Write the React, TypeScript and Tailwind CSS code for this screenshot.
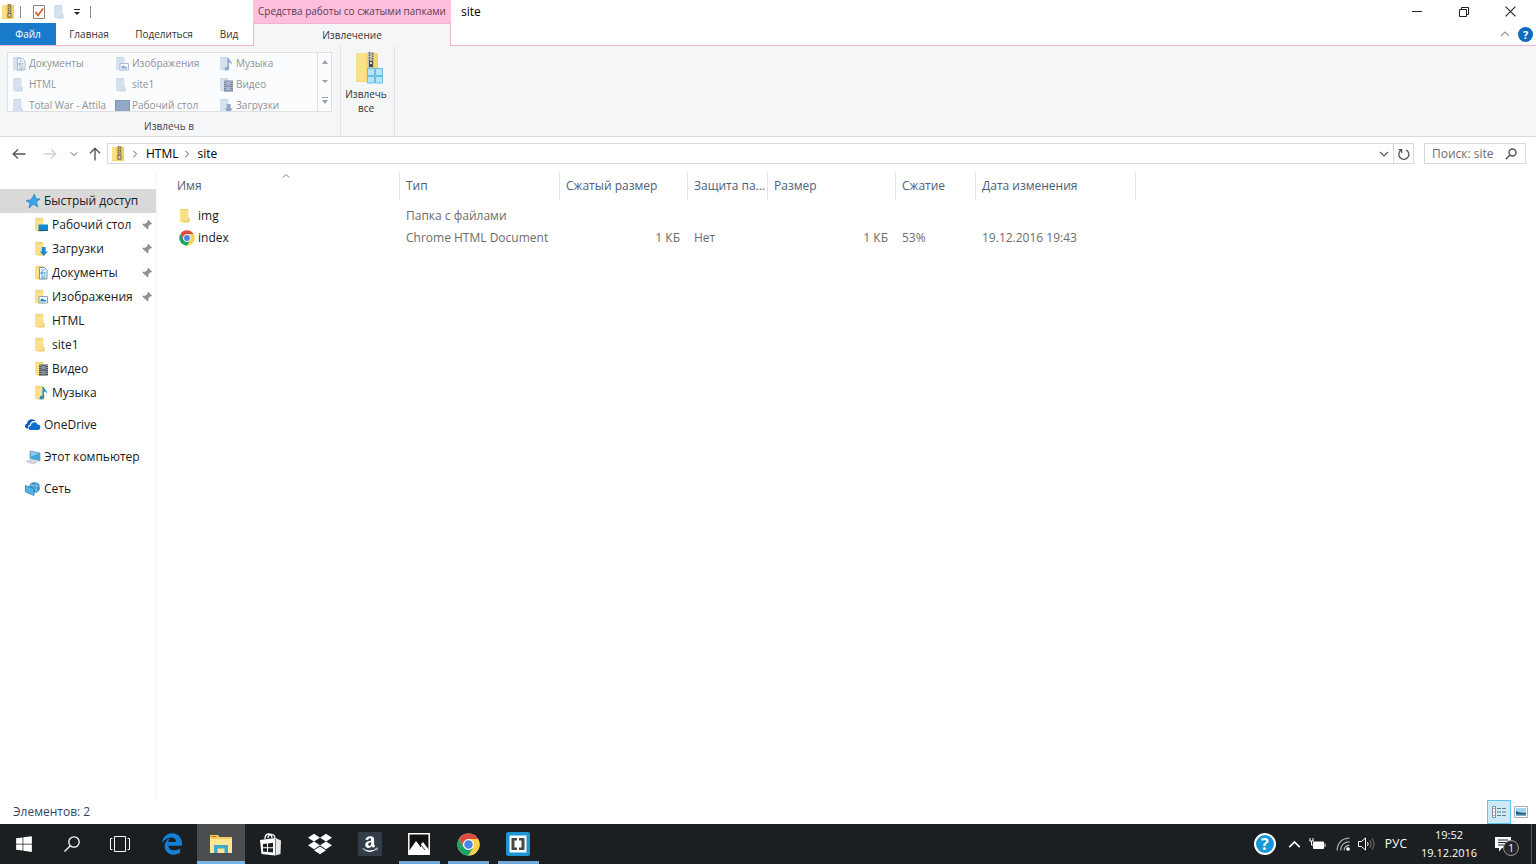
import { FunctionComponent, ReactNode } from "react";
import { FaAmazon, FaDropbox, FaEdgeLegacy, FaWindows } from "react-icons/fa6";

type Badge = "desktop" | "download" | "document" | "image" | "video" | "music";

const FolderIcon: FunctionComponent<{ badge?: Badge; muted?: boolean }> = ({ badge, muted }) => {
  const back = muted ? "#c6d5e8" : "#efcb63";
  const front = muted ? "#d6e1ef" : "#fbdf8a";
  const blue = muted ? "#8ea6c8" : "#1c8ad8";
  const dark = muted ? "#7484a0" : "#4a4f57";
  return (
    <svg className="h-4 w-4 shrink-0" viewBox="0 0 16 16">
      {badge === "desktop" && muted ? (
        <path d="M.5 2.500h14v11H.5z" fill="#93a8c8" stroke="#8296b8" />
      ) : (
        <>
          <path d="M2 1h7v13H2z" fill={back} />
          <path d="M1 1l3 1v12.500l-3-.8z" fill={front} />
          <path d="M4 2h5.500v11H4z" fill={front} />
          <path d="M9 10h1.500v4.500H4V13h5z" fill={back} />
        </>
      )}
      {badge === "desktop" && !muted && (
        <>
          <path d="M4.500 7.500h9.500v6.500H4.500z" fill="#1587d4" />
          <path d="M4.500 13h9.500v1H4.500z" fill="#0c5d9b" />
        </>
      )}
      {badge === "download" && <path d="M7.800 6h3.800v4.500h2.200l-4 4.500-4-4.500h2z" fill={blue} />}
      {badge === "document" && (
        <>
          <path d="M5.500 2.500h5l2.500 2.500v9H5.500z" fill="#f5f9fd" stroke={muted ? "#a9bcd6" : "#7396b9"} />
          <path d="M7 7h2v2H7zM7 11h4.500M10 7.500h1.500M10 9h1.500M7.500 5h3M7 12.800h4.500" fill="none" stroke={blue} strokeWidth=".8" />
        </>
      )}
      {badge === "image" && (
        <>
          <path d="M5 7.500h8.500V14H5z" fill="#f8fbfd" stroke={muted ? "#a9bcd6" : "#8ea3b5"} />
          <path d="M6.500 12.500V10.500l2-1 2 1.500h1.700v1.500z" fill={blue} />
        </>
      )}
      {badge === "video" && (
        <>
          <path d="M5 3.500h9v11H5z" fill={dark} />
          <path d="M7.200 4.500h4.500v4H7.200zM7.200 9.500h4.500v4H7.200z" fill={muted ? "#a9b8d0" : "#8293a6"} />
          <path d="M6 4v10M13 4v10" stroke="#e3e7ec" strokeDasharray="1 1" />
        </>
      )}
      {badge === "music" && (
        <path d="M8.500 2H10c.2 2.500 3.500 3.500 3 7-.4-1.500-1.500-2.500-3-2.500v5.500c0 3-4.300 3.200-4.300.8 0-1.800 1.500-2.300 2.800-2z" fill={blue} />
      )}
    </svg>
  );
};

const ZipIcon = () => (
  <svg className="h-4 w-4 shrink-0" viewBox="0 0 16 16">
    <path d="M2 1h12v14H2z" fill="#f3cf5b" />
    <path d="M2 1h4v14l-4-1z" fill="#fbe185" />
    <path d="M7.500 0h4v14h-4z" fill="#b7a766" />
    <path d="M8.500 0v9M10.500 1v8" stroke="#6f6a55" strokeDasharray="1 1" />
    <path d="M8 9.500h3v3.500H8z" fill="#ddd6b8" stroke="#7c7452" />
  </svg>
);

const ExtractIcon = () => (
  <svg className="ml-1 h-8 w-8" viewBox="-1 0 32 32">
    <path d="M3 1h22v29H3z" fill="#f6d56f" />
    <path d="M3 1h10v29l-10-1z" fill="#fbe08b" />
    <path d="M15 0h6v16h-6z" fill="#c9c5b4" />
    <path d="M16.500 0v9M19.500 1v9" stroke="#66645c" strokeWidth="1.500" strokeDasharray="1.500 1" />
    <path d="M16 9h4v6h-4z" fill="#4d4b47" />
    <path d="M17 10h2v2h-2z" fill="#e5e2da" />
    <g fill="#b5e4fa" stroke="#69bde3">
      <path d="M14.500 16.500h7v7h-7zM22.500 16.500h7v7h-7zM14.500 24.500h7v6.500h-7zM22.500 24.500h7v6.500h-7z" />
    </g>
  </svg>
);

const ChromeIcon: FunctionComponent<{ className: string }> = ({ className }) => (
  <svg className={className} viewBox="0 0 48 48">
    <circle cx="24" cy="24" r="23" fill="#fff" />
    <path d="M4.080 12.500A23 23 0 0 1 43.920 12.500H24A11.500 11.500 0 0 0 14.040 29.750z" fill="#dd4b3e" />
    <path d="M43.920 12.500A23 23 0 0 1 24 47L33.960 29.750A11.500 11.500 0 0 0 24 12.500z" fill="#fdd046" />
    <path d="M24 47A23 23 0 0 1 4.080 12.500L14.040 29.750A11.500 11.500 0 0 0 33.960 29.750z" fill="#1ca261" />
    <circle cx="24" cy="24" r="11" fill="#f1f1f1" />
    <circle cx="24" cy="24" r="8.800" fill="#4a86e8" />
  </svg>
);

const Chevron: FunctionComponent<{ d: string; className: string }> = ({ d, className }) => (
  <svg className={className} viewBox="0 0 10 10" fill="none" stroke="currentColor" strokeWidth="1.200">
    <path d={d} />
  </svg>
);

const DOWN = "M1 3l4 4 4-4";
const UP = "M1 7l4-4 4 4";
const RIGHT = "M3 1l4 4-4 4";

const PinIcon = () => (
  <svg className="h-3 w-3" viewBox="0 0 12 12">
    <path d="M7.200.8l4 4-1 .7-.8-.2-2 2 .2 2-1 1-2.500-2.500L.8 11.200 3.700 7.700 1.500 5.500l1-1 2 .2 2-2-.1-1z" fill="#8a9096" />
  </svg>
);

const StarIcon = () => (
  <svg className="h-4 w-4" viewBox="0 0 16 16">
    <path d="M9.500 1l1.200 4.600 4.300.4-3.600 3 1.400 5-4.300-2.800L4 15l1-4.800L1 7.500l4.900-.6z" fill="#3ba3ea" stroke="#2182c8" strokeWidth=".7" />
  </svg>
);

const OneDriveIcon = () => (
  <svg className="h-4 w-4" viewBox="0 0 16 16">
    <path d="M1.800 11.500C-.8 10.500-.4 7 2 6.800 2.200 2 8.500.5 10.800 4.300 7.500 3.500 5.200 5.500 5 7.800 2.800 8.200 2.600 10.300 3.500 11.500z" fill="#0d5db8" />
    <path d="M5.500 13c-2.800-.3-2.500-4.200.3-4.200C6.200 4.500 11.500 4 12.500 7.600c1.700-.2 3 1 2.800 3-.1 1.600-1 2.400-2.300 2.400z" fill="#0d6fd0" />
  </svg>
);

const ComputerIcon = () => (
  <svg className="h-4 w-4" viewBox="0 0 16 16">
    <path d="M5 2l10 2v8L5 9.500z" fill="#41a5df" stroke="#7f9db3" strokeWidth=".8" />
    <path d="M5.500 2.500l8 2-7.500 3z" fill="#8acdf0" />
    <path d="M1 12.500l4-1.500 7 2-4 2z" fill="#d3d9de" stroke="#a7afb6" strokeWidth=".5" />
  </svg>
);

const NetworkIcon = () => (
  <svg className="h-4 w-4" viewBox="0 0 16 16">
    <circle cx="9.500" cy="6.500" r="5.500" fill="#3c8fc4" />
    <path d="M5 5c3-1 6-1 10 1M10 1c2 3 2 7 0 11M6 3l7 8" fill="none" stroke="#9fd4ef" strokeWidth=".8" />
    <path d="M.5 4.500l8.500 3v7l-2.500-1L.5 11z" fill="#53b2e6" stroke="#2a77ab" strokeWidth=".7" />
  </svg>
);

const galleryItems: { name: string; badge?: Badge }[] = [
  { name: "Документы", badge: "document" },
  { name: "Изображения", badge: "image" },
  { name: "Музыка", badge: "music" },
  { name: "HTML" },
  { name: "site1" },
  { name: "Видео", badge: "video" },
  { name: "Total War - Attila" },
  { name: "Рабочий стол", badge: "desktop" },
  { name: "Загрузки", badge: "download" },
];

const quickAccess: { name: string; badge?: Badge; pinned?: boolean }[] = [
  { name: "Рабочий стол", badge: "desktop", pinned: true },
  { name: "Загрузки", badge: "download", pinned: true },
  { name: "Документы", badge: "document", pinned: true },
  { name: "Изображения", badge: "image", pinned: true },
  { name: "HTML" },
  { name: "site1" },
  { name: "Видео", badge: "video" },
  { name: "Музыка", badge: "music" },
];

const TitleBar = () => (
  <div className="flex h-[23px]">
    <div className="flex w-[253px] items-center">
      <ZipIcon />
      <span className="ml-1 h-3 w-px bg-[#8a8a8a]" />
      <button className="ml-[10px]" aria-label="Свойства">
        <svg className="h-4 w-4" viewBox="0 0 16 16">
          <path d="M2.500 1.500h11v13h-11z" fill="#fff" stroke="#8f8478" />
          <path d="M4.500 8l2.500 3.500 5-7" fill="none" stroke="#d9622b" strokeWidth="1.800" />
        </svg>
      </button>
      <button className="ml-[6px]" aria-label="Новая папка">
        <FolderIcon muted />
      </button>
      <button className="ml-1" aria-label="Настройка панели">
        <svg className="h-2 w-2" viewBox="0 0 8 8">
          <path d="M1 1.500h6" stroke="#222" />
          <path d="M1 4h6l-3 3z" fill="#222" />
        </svg>
      </button>
      <span className="ml-[9px] h-3 w-px bg-[#8a8a8a]" />
    </div>
    <div className="flex w-[198px] items-center justify-center whitespace-nowrap bg-[#fdbfdc] text-[10px] text-[#5e3c4d]">
      Средства работы со сжатыми папками
    </div>
    <h1 className="flex flex-1 items-center pl-[10px] text-xs text-black">site</h1>
    <div className="flex pr-[2px] text-[#222]">
      <button className="flex w-[47px] items-center justify-center" aria-label="Свернуть">
        <span className="h-px w-[10px] bg-[#222]" />
      </button>
      <button className="flex w-[47px] items-center justify-center" aria-label="Восстановить">
        <svg className="h-[10px] w-[10px]" viewBox="0 0 10 10" fill="none" stroke="currentColor">
          <path d="M.5 2.500h7v7h-7zM2.500 2.500v-2h7v7h-2" />
        </svg>
      </button>
      <button className="flex w-[47px] items-center justify-center" aria-label="Закрыть">
        <svg className="h-[11px] w-[11px]" viewBox="0 0 10 10" fill="none" stroke="currentColor">
          <path d="M.5.5l9 9M9.500.5l-9 9" />
        </svg>
      </button>
    </div>
  </div>
);

const RibbonTabs = () => (
  <div className="flex h-[23px] text-[10px] text-[#333]">
    <div className="flex w-[253px] border-b border-[#f0b3d1]">
      <button className="w-14 bg-[#1979ca] text-white">Файл</button>
      <button className="w-[66px]">Главная</button>
      <button className="w-[84px]">Поделиться</button>
      <button className="w-[46px]">Вид</button>
    </div>
    <button className="w-[198px] border-x border-t border-[#f0b3d1] bg-[#f5f6f8]">Извлечение</button>
    <div className="flex flex-1 items-center justify-end gap-2 border-b border-[#f0b3d1] pr-[3px]">
      <button aria-label="Свернуть ленту">
        <Chevron d={UP} className="h-[10px] w-[10px] text-[#9a9a9a]" />
      </button>
      <button className="h-[15px] w-[15px] rounded-full bg-[#0f6cbd] text-[11px] leading-[15px] font-bold text-white">?</button>
    </div>
  </div>
);

const Ribbon = () => (
  <div className="flex h-[91px] border-b border-[#dadbdc] bg-[#f5f6f8] text-[10px]">
    <div className="flex w-[341px] flex-col border-r border-[#e2e3e4] pt-[6px] pl-[7px]">
      <div className="flex h-[60px] w-[325px] overflow-hidden border border-[#dcdfe3] bg-[#fafcfe]">
        <div className="grid flex-1 auto-rows-[21px] grid-cols-[103px_104px_1fr] pl-1">
          {galleryItems.map((item) => (
            <button key={item.name} className="flex items-center gap-px whitespace-nowrap text-[#8f9297]">
              <FolderIcon badge={item.badge} muted />
              {item.name}
            </button>
          ))}
        </div>
        <div className="flex w-[14px] flex-col items-center justify-between border-l border-[#dcdfe3] py-[6px]">
          <svg className="h-[6px] w-[6px]" viewBox="0 0 6 6" fill="#9a9ea5">
            <path d="M0 5l3-4 3 4z" />
          </svg>
          <svg className="h-[6px] w-[6px]" viewBox="0 0 6 6" fill="#9a9ea5">
            <path d="M0 2h6l-3 3z" />
          </svg>
          <svg className="h-2 w-2" viewBox="0 0 8 8" fill="#9a9ea5">
            <path d="M1 0h6v1H1zM1 3h6l-3 4z" />
          </svg>
        </div>
      </div>
      <div className="flex flex-1 items-end justify-center pr-[9px] pb-[2px] text-[#444]">Извлечь в</div>
    </div>
    <div className="flex w-[54px] justify-center border-r border-[#e2e3e4] pt-[6px] pr-[3px]">
      <button className="flex flex-col items-center self-start leading-[14px] text-[#333]">
        <ExtractIcon />
        <span className="mt-[3px]">
          Извлечь
          <br />
          все
        </span>
      </button>
    </div>
  </div>
);

const AddressBar = () => (
  <div className="flex items-center gap-[10px] pt-[6px] pr-[10px] pb-2 text-xs">
    <div className="flex flex-1 items-center">
      <div className="flex w-[107px] items-center pl-3 text-[#555]">
        <button aria-label="Назад">
          <svg className="h-[14px] w-[14px]" viewBox="0 0 14 14" fill="none" stroke="currentColor" strokeWidth="1.400">
            <path d="M13.500 7H1M6 2.500L1.200 7 6 11.500" />
          </svg>
        </button>
        <button className="ml-[17px] text-[#d0d0d0]" aria-label="Вперед">
          <svg className="h-[14px] w-[14px]" viewBox="0 0 14 14" fill="none" stroke="currentColor" strokeWidth="1.400">
            <path d="M.5 7H13M8 2.500L12.800 7 8 11.500" />
          </svg>
        </button>
        <button className="ml-[13px]" aria-label="Журнал">
          <Chevron d={DOWN} className="h-2 w-2" />
        </button>
        <button className="ml-[10px]" aria-label="Вверх">
          <svg className="h-[14px] w-[14px]" viewBox="0 0 14 14" fill="none" stroke="currentColor" strokeWidth="1.400">
            <path d="M7 13.500V1M2 6.200L7 1.200l5 5" />
          </svg>
        </button>
      </div>
      <div className="flex h-[21px] flex-1 items-center border border-[#d9d9d9] pl-[2px] text-black">
        <ZipIcon />
        <Chevron d={RIGHT} className="ml-[5px] h-2 w-2 text-[#555]" />
        <a href="#html" className="ml-[7px]">HTML</a>
        <Chevron d={RIGHT} className="ml-1 h-2 w-2 text-[#555]" />
        <a href="#site" className="ml-[7px]">site</a>
        <button className="ml-auto mr-1 text-[#555]" aria-label="Предыдущие расположения">
          <Chevron d={DOWN} className="h-[10px] w-[10px]" />
        </button>
        <button className="flex h-full w-5 items-center justify-center border-l border-[#d9d9d9] text-[#555]" aria-label="Обновить">
          <svg className="h-3 w-3" viewBox="0 0 12 12" fill="none" stroke="currentColor" strokeWidth="1.300">
            <path d="M8 1.800A5 5 0 1 1 3 2.200M3.600 5V1.700H.5" />
          </svg>
        </button>
      </div>
    </div>
    <label className="flex h-[21px] w-[102px] items-center border border-[#d9d9d9] pr-2 pl-[7px]">
      <input className="w-0 flex-1 placeholder-[#6d6d6d] outline-none" placeholder="Поиск: site" aria-label="Поиск" />
      <svg className="h-3 w-3 text-[#555]" viewBox="0 0 12 12" fill="none" stroke="currentColor" strokeWidth="1.400">
        <circle cx="7.500" cy="4.500" r="3.500" />
        <path d="M5 7L.8 11.200" />
      </svg>
    </label>
  </div>
);

const SideLink: FunctionComponent<{ icon: ReactNode; name: string }> = ({ icon, name }) => (
  <a href="#place" className="mt-2 flex h-6 items-center gap-[3px] pl-[25px]">
    {icon}
    {name}
  </a>
);

const Sidebar = () => (
  <nav className="w-[157px] shrink-0 whitespace-nowrap border-r border-[#f4f4f4] pt-[17px] text-xs text-[#1a1a1a]">
    <a href="#quick" className="flex h-6 items-center gap-[3px] bg-[#d9d9d9] pl-[25px]">
      <StarIcon />
      Быстрый доступ
    </a>
    {quickAccess.map((item) => (
      <a key={item.name} href="#folder" className="flex h-6 items-center gap-[2px] pr-[3px] pl-[34px]">
        <FolderIcon badge={item.badge} />
        <span className="flex-1">{item.name}</span>
        {item.pinned && <PinIcon />}
      </a>
    ))}
    <SideLink icon={<OneDriveIcon />} name="OneDrive" />
    <SideLink icon={<ComputerIcon />} name="Этот компьютер" />
    <SideLink icon={<NetworkIcon />} name="Сеть" />
  </nav>
);

const columns = ["Имя", "Тип", "Сжатый размер", "Защита па...", "Размер", "Сжатие", "Дата изменения"];

const FileTable = () => (
  <main className="flex-1 pl-[14px]">
    <table className="w-full table-fixed text-left text-xs text-[#6d6d6d]">
      <colgroup>
        <col className="w-[229px]" />
        <col className="w-[160px]" />
        <col className="w-[128px]" />
        <col className="w-[80px]" />
        <col className="w-[128px]" />
        <col className="w-[80px]" />
        <col className="w-[160px]" />
        <col />
      </colgroup>
      <thead>
        <tr>
          {columns.map((name, i) => (
            <th key={name} className="relative h-[33px] p-0 align-top font-normal text-[#4c607a]">
              <div className="flex h-7 items-center whitespace-nowrap border-r border-[#e5e5e5] pl-[6px]">{name}</div>
              {i === 0 && <Chevron d={UP} className="absolute top-0 left-1/2 h-2 w-2 -translate-x-1/2 text-[#777]" />}
            </th>
          ))}
          <th />
        </tr>
      </thead>
      <tbody>
        <tr className="h-[22px]">
          <td className="pl-2">
            <a href="#img" className="flex items-center gap-[3px] text-[#1a1a1a]">
              <FolderIcon />
              img
            </a>
          </td>
          <td className="pl-[6px]">Папка с файлами</td>
          <td colSpan={6} />
        </tr>
        <tr className="h-[22px]">
          <td className="pl-2">
            <a href="#index" className="flex items-center gap-[3px] text-[#1a1a1a]">
              <ChromeIcon className="h-4 w-4" />
              index
            </a>
          </td>
          <td className="pl-[6px]">Chrome HTML Document</td>
          <td className="pr-2 text-right">1 КБ</td>
          <td className="pl-[6px]">Нет</td>
          <td className="pr-2 text-right">1 КБ</td>
          <td className="pl-[6px]">53%</td>
          <td className="pl-[6px]">19.12.2016 19:43</td>
          <td />
        </tr>
      </tbody>
    </table>
  </main>
);

const StatusBar = () => (
  <div className="flex h-6 items-center pl-[13px] text-xs text-[#33475f]">
    <span className="flex-1">Элементов: 2</span>
    <button className="flex h-6 w-6 items-center justify-center border border-[#5fc3ec] bg-[#cdeaf8]" aria-label="Таблица">
      <svg className="h-[14px] w-4" viewBox="0 0 16 14">
        <path d="M1.500 1.500h3v11h-3z" fill="#fff" stroke="#8b8f94" />
        <path d="M3 3v1M3 6.500v1M3 10v1" stroke="#c43b3b" />
        <path d="M6 3.500h4M11 3.500h4M6 7h4M11 7h4M6 10.500h4M11 10.500h4" stroke="#6d7a86" />
      </svg>
    </button>
    <button className="ml-[2px] mr-[7px] flex h-6 w-4 items-center justify-center" aria-label="Крупные значки">
      <svg className="h-3 w-[14px]" viewBox="0 0 14 12">
        <path d="M.5.500h13v11H.5z" fill="#fff" stroke="#a9adb2" />
        <path d="M2 2h10v8H2z" fill="#a5d2ef" />
        <path d="M2 5l4 1.500 6 .5v3H2z" fill="#275a80" />
        <path d="M2 8.500h10V10H2z" fill="#7fa9c7" />
      </svg>
    </button>
  </div>
);

const TaskButton: FunctionComponent<{ label: string; state?: "open" | "active"; children: ReactNode }> = ({ label, state, children }) => (
  <button className="flex h-10 flex-1 flex-col items-center" aria-label={label}>
    <span className={state === "active" ? "flex w-12 flex-1 items-center justify-center bg-[#4b4d4f] pt-[3px]" : "flex w-12 flex-1 items-center justify-center pt-[3px]"}>
      {children}
    </span>
    <span className={state === "active" ? "h-[3px] w-12 bg-[#76b5ea]" : state === "open" ? "h-[3px] w-[41px] bg-[#6fa9dc]" : "h-[3px]"} />
  </button>
);

const Taskbar = () => (
  <footer className="flex h-10 items-center bg-[#1c1f22] text-white">
    <button className="flex h-10 w-12 items-center justify-center" aria-label="Пуск">
      <FaWindows className="h-[18px] w-[18px]" />
    </button>
    <button className="flex h-10 w-12 items-center justify-center" aria-label="Поиск в Windows">
      <svg className="h-4 w-4" viewBox="0 0 16 16" fill="none" stroke="currentColor" strokeWidth="1.300">
        <circle cx="10" cy="6" r="5.200" />
        <path d="M6.300 9.700L.5 15.500" />
      </svg>
    </button>
    <button className="flex h-10 w-12 items-center justify-center" aria-label="Представление задач">
      <svg className="h-4 w-5" viewBox="0 0 20 16" fill="none" stroke="currentColor">
        <path d="M4.500.5h11v15h-11zM2.500 2.500h-2v11h2M17.500 2.500h2v11h-2" />
      </svg>
    </button>
    <div className="flex w-[399px] pl-[3px]">
      <TaskButton label="Edge">
        <FaEdgeLegacy className="h-[22px] w-[22px] text-[#1380d8]" />
      </TaskButton>
      <TaskButton label="Проводник" state="active">
        <svg className="h-5 w-[22px]" viewBox="0 0 22 20">
          <path d="M0 1h8l1.500 2H22v16H0z" fill="#f0ce62" />
          <path d="M0 5h22v14H0z" fill="#fde796" />
          <path d="M1.500 2h5v1h-5z" fill="#d35c34" />
          <path d="M4 11h14v8h-3.500v-4.500h-7V19H4z" fill="#40a9c9" />
        </svg>
      </TaskButton>
      <TaskButton label="Магазин">
        <svg className="h-6 w-[22px]" viewBox="0 0 22 24">
          <path d="M5 7C5 .5 12 .5 12 6M8 6c0-5 7-5 7 1" fill="none" stroke="#fff" strokeWidth="1.300" />
          <path d="M0 8l15-2v17.500L1.500 22z" fill="#fff" />
          <path d="M15.500 6l5.500 2.500-.5 13.500-5 1.500z" fill="#e8e8e8" />
          <path d="M3 12l4-.5v3.700H3zM8 11.400l5-.6v4.400H8zM3 16.200h4v3.700l-4-.5zM8 16.200h5v4.400l-5-.6z" fill="#1c1f22" />
        </svg>
      </TaskButton>
      <TaskButton label="Dropbox">
        <FaDropbox className="h-6 w-6" />
      </TaskButton>
      <TaskButton label="Amazon">
        <span className="flex h-6 w-6 items-center justify-center bg-[#333d4a]">
          <FaAmazon className="h-[18px] w-[18px]" />
        </span>
      </TaskButton>
      <TaskButton label="Фотографии" state="open">
        <svg className="h-[22px] w-[22px]" viewBox="0 0 22 22">
          <path d="M.8.800h20.400v20.400H.8z" fill="#111" stroke="#fff" strokeWidth="1.500" />
          <path d="M1 18l7-10 5 6.500V11l2-2 6 8v4H1z" fill="#fff" />
          <path d="M13 12l4 5" stroke="#111" strokeWidth=".8" />
        </svg>
      </TaskButton>
      <TaskButton label="Chrome" state="open">
        <ChromeIcon className="h-[23px] w-[23px]" />
      </TaskButton>
      <TaskButton label="Brackets" state="open">
        <svg className="h-6 w-6" viewBox="0 0 24 24">
          <rect width="24" height="24" rx="2" fill="#1e94d2" />
          <path d="M3.500 3.500h17v17h-17z" fill="#fff" />
          <path d="M5.500 6h5.500v2.500H8.500v7H11V18H5.500zM18.500 6H13v2.500h2.500v7H13V18h5.500z" fill="#474747" />
        </svg>
      </TaskButton>
    </div>
    <div className="ml-auto flex h-10 items-center">
      <button className="flex h-[22px] w-[22px] items-center justify-center rounded-full border-2 border-white bg-[#1597d8] text-base leading-none font-bold" aria-label="Справка">
        ?
      </button>
      <button className="ml-3" aria-label="Скрытые значки">
        <Chevron d={UP} className="h-[13px] w-[13px]" />
      </button>
      <svg className="ml-2 h-3 w-[17px]" viewBox="0 0 17 12" fill="none" stroke="#fff">
        <path d="M4.500 4h10v6.500h-10z" fill="#fff" />
        <path d="M16 5.500v3.500M1 0v3M4 0v3M.5 3h4M2.500 3v4h2" />
      </svg>
      <svg className="ml-[10px] h-[14px] w-[14px]" viewBox="0 0 14 14" fill="none" stroke="#aaa" strokeWidth="1.200">
        <path d="M1.200 13.500C1.200 6 6 1.200 13.500 1.200M4.700 13.500C4.700 8 8 4.800 13.500 4.800M8.200 13.500c0-3 2-5.200 5.300-5.200" />
        <circle cx="12" cy="12" r="1.200" fill="#fff" stroke="#fff" />
      </svg>
      <svg className="ml-2 h-[14px] w-[17px]" viewBox="0 0 17 14" fill="none" stroke="#fff">
        <path d="M.5 4.500h3l4-3.500v12l-4-3.500h-3zM9.500 5q1.300 2 0 4" />
        <path d="M12 3.200q2.600 3.800 0 7.600M14.200 1.500q3.600 5.500 0 11" stroke="#777" />
      </svg>
      <button className="ml-[10px] text-xs">РУС</button>
      <div className="ml-[11px] w-[62px] text-center text-[11px] leading-[18px]">
        19:52
        <br />
        19.12.2016
      </div>
      <button className="relative ml-[15px] mr-[12px] h-6 w-6" aria-label="Уведомления">
        <svg className="h-4 w-4" viewBox="0 0 16 16">
          <path d="M0 1h16v11H7l-3 3.500V12H0z" fill="#fff" />
          <path d="M3 4h10M3 6.500h10M3 9h7" stroke="#1c1f22" />
        </svg>
        <span className="absolute right-0 bottom-0 h-4 w-4 rounded-full border border-[#999] bg-[#26282b] text-[10px] leading-[14px]">1</span>
      </button>
      <span className="mr-1 h-10 w-px bg-[#55585a]" />
    </div>
  </footer>
);

const App: FunctionComponent = () => {
  return (
    <div className="flex min-h-screen flex-col bg-white font-['Open_Sans',sans-serif]">
      <header>
        <TitleBar />
        <RibbonTabs />
        <Ribbon />
      </header>
      <AddressBar />
      <div className="flex flex-1">
        <Sidebar />
        <FileTable />
      </div>
      <StatusBar />
      <Taskbar />
    </div>
  );
};
export default App;
